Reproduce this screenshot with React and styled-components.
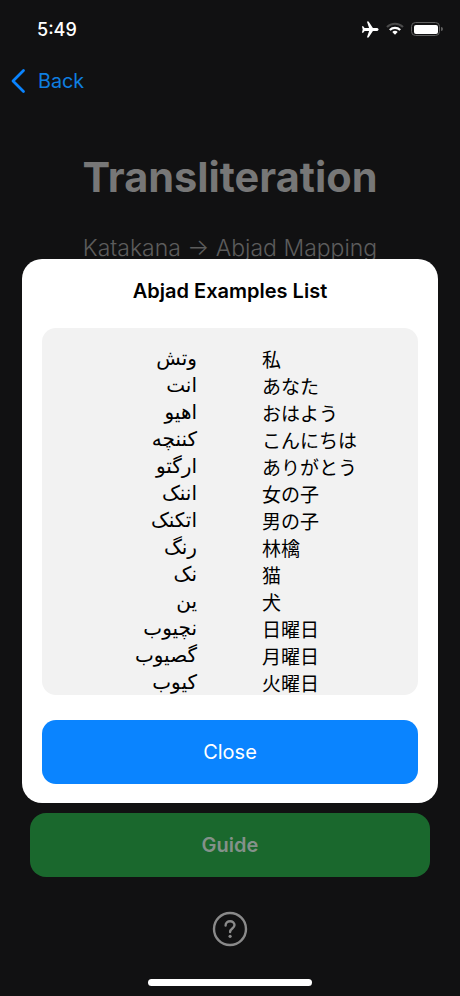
import React from 'react'
import styled, { createGlobalStyle } from 'styled-components'

const rows = [
  ['وتش', '私'],
  ['انت', 'あなた'],
  ['اهيو', 'おはよう'],
  ['کننچه', 'こんにちは'],
  ['ارگتو', 'ありがとう'],
  ['اننک', '女の子'],
  ['اتکنک', '男の子'],
  ['رنگ', '林檎'],
  ['نک', '猫'],
  ['ین', '犬'],
  ['نچیوب', '日曜日'],
  ['گصیوب', '月曜日'],
  ['کیوب', '火曜日'],
]

const App = () => {
  return (
    <Screen>
      <GlobalStyle />
      <StatusBar>
        <Time>5:49</Time>
        <StatusIcons>
          <svg width="18" height="17" viewBox="0 0 18 17">
            <path d="M17.600 8.500c0-.9-1-1.500-2-1.500h-3.700L7.600.4H5.900l2.200 6.600H3.600L2.200 5.200H.9l.8 3.300-.8 3.300h1.300l1.400-1.800h4.500l-2.200 6.600h1.700l4.300-6.600h3.700c1 0 2-.6 2-1.500z" fill="#fff" />
          </svg>
          <svg width="18" height="14" viewBox="0 0 18 14">
            <path d="M1 5a11.500 11.500 0 0 1 16 0" fill="none" stroke="#4a4a4a" strokeWidth="2.200" />
            <path d="M3.800 8a7.400 7.400 0 0 1 10.400 0" fill="none" stroke="#fff" strokeWidth="2.200" />
            <path d="M9 8.800c1.100 0 2 .4 2.700 1.100L9 12.800 6.300 9.900C7 9.200 7.900 8.800 9 8.800z" fill="#fff" />
          </svg>
          <Battery>
            <BatteryFill />
          </Battery>
        </StatusIcons>
      </StatusBar>

      <BackRow>
        <svg width="16" height="26" viewBox="0 0 16 26">
          <path d="M13.500 2.500 3 13l10.500 10.500" fill="none" stroke="#0a84ff" strokeWidth="2.800" strokeLinecap="round" strokeLinejoin="round" />
        </svg>
        <BackLabel>Back</BackLabel>
      </BackRow>

      <Title>Transliteration</Title>
      <Subtitle>Katakana → Abjad Mapping</Subtitle>

      <Spacer />

      <GuideButton>Guide</GuideButton>
      <HelpRow>
        <svg width="36" height="36" viewBox="0 0 36 36">
          <circle cx="18" cy="18" r="16" fill="none" stroke="#8a8a8a" strokeWidth="2.400" />
          <path d="M13.600 14.500c0-2.600 2-4.200 4.500-4.200s4.400 1.500 4.400 3.800c0 3.400-4.400 3.500-4.400 6.900" fill="none" stroke="#8a8a8a" strokeWidth="2.400" strokeLinecap="round" />
          <circle cx="18.100" cy="25.300" r="1.600" fill="#8a8a8a" />
        </svg>
      </HelpRow>
      <HomeBar />

      <Modal>
        <ModalTitle>Abjad Examples List</ModalTitle>
        <ListBox>
          {rows.map(([abjad, jp]) => (
            <Row key={jp}>
              <Abjad dir="rtl">{abjad}</Abjad>
              <Japanese lang="ja">{jp}</Japanese>
            </Row>
          ))}
        </ListBox>
        <CloseButton>Close</CloseButton>
      </Modal>
    </Screen>
  )
}

export default App

const GlobalStyle = createGlobalStyle`
html,body{
  margin:0;
  padding:0;
  background:#111112;
}
`

const Screen = styled.div`
position:relative;
width:460px;
height:996px;
overflow:hidden;
background:#111112;
display:flex;
flex-direction:column;
align-items:center;
font-family:Inter,"Liberation Sans",sans-serif;
`

const StatusBar = styled.div`
width:100%;
height:58px;
box-sizing:border-box;
padding:0 20px 0 37px;
display:flex;
justify-content:space-between;
align-items:center;
`

const Time = styled.span`
color:#fff;
font-size:18px;
font-weight:500;
`

const StatusIcons = styled.div`
display:flex;
align-items:center;
gap:7px;
`

const Battery = styled.div`
position:relative;
width:29px;
height:14px;
box-sizing:border-box;
border:1.500px solid #606060;
border-radius:4.500px;
padding:1.500px;
&:after{
  content:'';
  position:absolute;
  right:-4px;
  top:3.500px;
  width:2px;
  height:4px;
  border-radius:0 2px 2px 0;
  background:#606060;
}
`

const BatteryFill = styled.div`
width:100%;
height:100%;
background:#fff;
border-radius:2px;
`

const BackRow = styled.div`
width:100%;
height:46px;
box-sizing:border-box;
padding:0 0 0 10px;
display:flex;
align-items:center;
gap:12px;
`

const BackLabel = styled.span`
color:#0f7fe0;
font-size:19.800px;
`

const Title = styled.h1`
margin:48px 0 0;
color:#777777;
font-size:41.500px;
line-height:50px;
font-weight:700;
`

const Subtitle = styled.div`
margin-top:32px;
color:#5c5c5c;
font-size:23px;
line-height:28px;
font-weight:300;
white-space:nowrap;
`

const Spacer = styled.div`
flex:1;
`

const GuideButton = styled.div`
width:400px;
height:64px;
flex:none;
border-radius:16px;
background:#1a682d;
color:#84918a;
font-size:20px;
font-weight:600;
display:flex;
align-items:center;
justify-content:center;
`

const HelpRow = styled.div`
margin-top:34px;
height:36px;
display:flex;
`

const HomeBar = styled.div`
margin:32px 0 10px;
width:164px;
height:7px;
border-radius:4px;
background:#fff;
`

const Modal = styled.div`
position:absolute;
left:22px;
top:259px;
width:416px;
height:544px;
box-sizing:border-box;
padding:20px 20px 19px;
background:#fff;
border-radius:20px;
display:flex;
flex-direction:column;
`

const ModalTitle = styled.div`
color:#000;
font-size:20px;
line-height:24px;
font-weight:600;
text-align:center;
`

const ListBox = styled.div`
margin-top:25px;
height:367px;
box-sizing:border-box;
padding-top:17px;
background:#f2f2f2;
border-radius:14px;
`

const Row = styled.div`
height:27px;
display:grid;
grid-template-columns:155px 1fr;
column-gap:65px;
align-items:center;
color:#000;
font-size:19px;
line-height:27px;
`

const Abjad = styled.span`
text-align:right;
font-family:"DejaVu Sans","Noto Sans",sans-serif;
font-size:20px;
`

const Japanese = styled.span`
font-family:"Noto Sans CJK JP",sans-serif;
`

const CloseButton = styled.div`
margin-top:25px;
height:64px;
border-radius:14px;
background:#0a84ff;
color:#fff;
font-size:20px;
display:flex;
align-items:center;
justify-content:center;
`
